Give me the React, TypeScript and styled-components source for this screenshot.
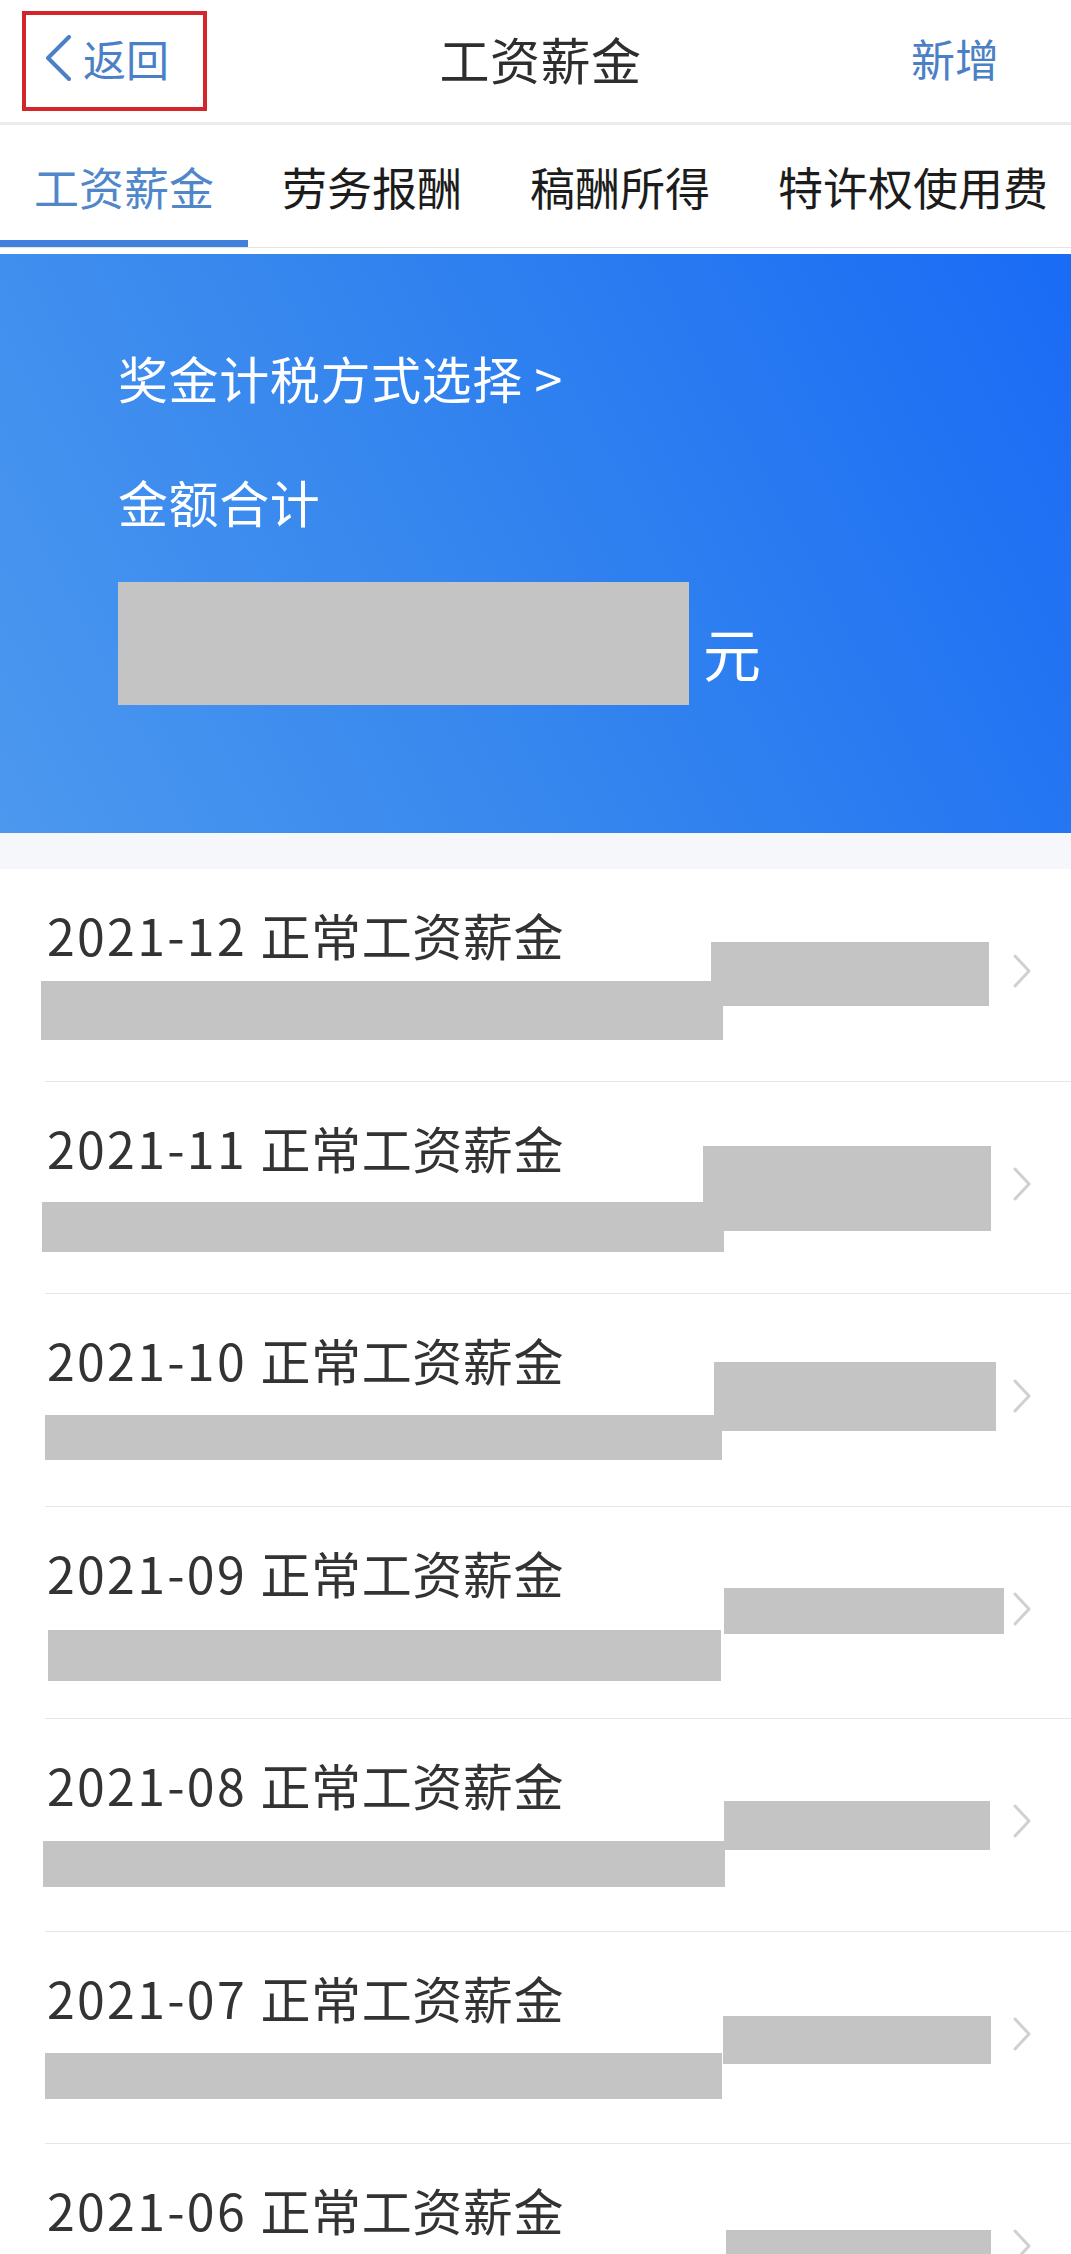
import styled, { createGlobalStyle } from 'styled-components';

const GlobalStyle = createGlobalStyle`
  html, body {
    margin: 0;
    padding: 0;
    background: #ffffff;
  }
  body {
    font-family: "Noto Sans CJK SC", "Noto Sans", sans-serif;
    -webkit-font-smoothing: antialiased;
  }
`;

const Page = styled.div`
  width: 1071px;
  height: 2254px;
  overflow: hidden;
  background: #ffffff;
`;

const Header = styled.header`
  display: grid;
  grid-template-columns: 1fr auto 1fr;
  align-items: center;
  height: 122px;
  padding: 0 22px;
  border-bottom: 3px solid #ececec;
`;

const BackButton = styled.div`
  justify-self: start;
  display: flex;
  align-items: center;
  box-sizing: border-box;
  width: 185px;
  height: 100px;
  padding: 0 0 6px 19px;
  border: 4px solid #d3262c;
  color: #4a80c6;
  font-size: 43px;
  gap: 11px;
`;

const Title = styled.h1`
  margin: 0 0 6px 10px;
  font-size: 50px;
  font-weight: 400;
  color: #2e2e2e;
  line-height: 1;
  letter-spacing: 0.5px;
`;

const AddLink = styled.span`
  justify-self: end;
  margin: 0 50px 6px 0;
  font-size: 44px;
  color: #4a80c6;
  line-height: 1;
`;

const TabBar = styled.nav`
  display: flex;
  height: 122px;
  overflow: hidden;
  border-bottom: 1px solid #e4e4e4;
`;

const Tab = styled.div<{ $active?: boolean }>`
  position: relative;
  flex: none;
  display: flex;
  align-items: center;
  padding: 0 34px;
  font-size: 45px;
  color: ${(p) => (p.$active ? '#4f87c9' : '#1c1c1c')};

  &::after {
    content: '';
    display: ${(p) => (p.$active ? 'block' : 'none')};
    position: absolute;
    left: 0;
    right: 0;
    bottom: -1px;
    height: 8px;
    background: #3f80dc;
  }
`;

const Summary = styled.section`
  margin-top: 6px;
  padding: 88px 0 128px 118px;
  background: linear-gradient(62deg, #4c98ef 0%, #3485ee 45%, #1a6bf5 100%);
  color: #ffffff;
`;

const SummaryLine = styled.div<{ $gap?: number }>`
  font-size: 50px;
  line-height: 70px;
  letter-spacing: 0.6px;
  margin-bottom: ${(p) => p.$gap ?? 0}px;
`;

const AmountRow = styled.div`
  display: flex;
  align-items: center;
`;

const AmountMask = styled.div`
  width: 571px;
  height: 123px;
  background: #c4c4c4;
`;

const Unit = styled.span`
  margin: 16px 0 0 14px;
  font-size: 58px;
  line-height: 70px;
`;

const Spacer = styled.div`
  height: 36px;
  background: #f6f7fa;
`;

const List = styled.div`
  padding-left: 45px;
  background: #ffffff;
`;

const Row = styled.div`
  position: relative;
  display: flex;
  align-items: center;
  justify-content: space-between;
  box-sizing: border-box;
  height: 212.5px;
  padding: 0 39px 0 2px;
  border-bottom: 1px solid #e6e6e6;
`;

const RowTitle = styled.div`
  align-self: flex-start;
  margin-top: 35px;
  font-size: 50px;
  line-height: 60px;
  color: #333333;
  letter-spacing: 0.6px;
`;

const Month = styled.span`
  letter-spacing: 2.3px;
`;

const Chevron = styled.svg`
  flex: none;
  margin-bottom: 7px;
`;

type Box = { x: number; y: number; w: number; h: number };

const Mask = styled.div.attrs<{ $box: Box }>((p) => ({
  style: {
    left: p.$box.x,
    top: p.$box.y,
    width: p.$box.w,
    height: p.$box.h,
  },
}))<{ $box: Box }>`
  position: absolute;
  background: #c4c4c4;
`;

const tabs = ['工资薪金', '劳务报酬', '稿酬所得', '特许权使用费'];

const rows: { month: string; right: Box; left: Box }[] = [
  { month: '2021-12', right: { x: 666, y: 73, w: 278, h: 64 }, left: { x: -4, y: 112, w: 682, h: 59 } },
  { month: '2021-11', right: { x: 658, y: 64, w: 288, h: 85 }, left: { x: -3, y: 120, w: 682, h: 50 } },
  { month: '2021-10', right: { x: 669, y: 68, w: 282, h: 69 }, left: { x: 0, y: 121, w: 677, h: 45 } },
  { month: '2021-09', right: { x: 679, y: 81, w: 280, h: 46 }, left: { x: 3, y: 123, w: 673, h: 51 } },
  { month: '2021-08', right: { x: 679, y: 82, w: 266, h: 49 }, left: { x: -2, y: 122, w: 682, h: 46 } },
  { month: '2021-07', right: { x: 678, y: 84, w: 268, h: 48 }, left: { x: 0, y: 121, w: 677, h: 46 } },
  { month: '2021-06', right: { x: 681, y: 86, w: 265, h: 48 }, left: { x: 0, y: 124, w: 677, h: 46 } },
];

const BackIcon = () => (
  <svg width="27" height="46" viewBox="0 0 27 46">
    <path
      d="M24 2 L3 23 L24 44"
      fill="none"
      stroke="#4a80c6"
      strokeWidth="4"
      strokeLinecap="round"
      strokeLinejoin="round"
    />
  </svg>
);

export default function App() {
  return (
    <Page>
      <GlobalStyle />
      <Header>
        <BackButton>
          <BackIcon />
          <span>返回</span>
        </BackButton>
        <Title>工资薪金</Title>
        <AddLink>新增</AddLink>
      </Header>

      <TabBar>
        {tabs.map((t, i) => (
          <Tab key={t} $active={i === 0}>
            {t}
          </Tab>
        ))}
      </TabBar>

      <Summary>
        <SummaryLine $gap={54}>奖金计税方式选择 &gt;</SummaryLine>
        <SummaryLine $gap={46}>金额合计</SummaryLine>
        <AmountRow>
          <AmountMask />
          <Unit>元</Unit>
        </AmountRow>
      </Summary>

      <Spacer />

      <List>
        {rows.map((r) => (
          <Row key={r.month}>
            <RowTitle>
              <Month>{r.month} </Month>正常工资薪金
            </RowTitle>
            <Chevron width="20" height="34" viewBox="0 0 20 34">
              <path
                d="M3 2 L17 17 L3 32"
                fill="none"
                stroke="#d0d0d0"
                strokeWidth="3"
                strokeLinecap="round"
                strokeLinejoin="round"
              />
            </Chevron>
            <Mask $box={r.right} />
            <Mask $box={r.left} />
          </Row>
        ))}
      </List>
    </Page>
  );
}
